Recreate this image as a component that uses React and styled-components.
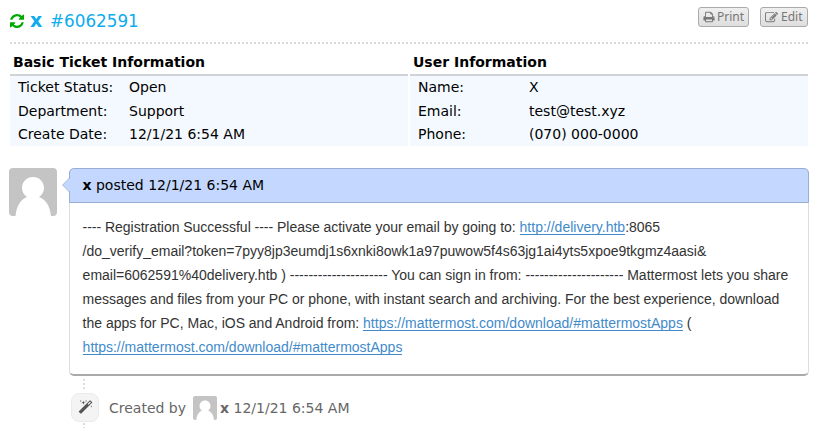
import React from 'react';
import styled, { createGlobalStyle } from 'styled-components';

const GlobalStyle = createGlobalStyle`
  * { box-sizing: border-box; }
  body {
    margin: 0;
    background: #fff;
    color: #000;
    font: 14px/20px "DejaVu Sans", sans-serif;
    overflow: hidden;
  }
`;

const Page = styled.main`
  height: 428px;
  padding: 0 9px;
  overflow: hidden;
`;

const Header = styled.header`
  display: flex;
  justify-content: space-between;
  align-items: flex-start;
  height: 44px;
  margin: 0 1px;
  padding-top: 7px;
  background: repeating-linear-gradient(90deg, #d8d8d8 0 2px, #fff 2px 4px) 0 100% / 100% 2px no-repeat;
`;

const Title = styled.h1`
  display: flex;
  align-items: center;
  margin: 3px 0 0;
  font-size: 16.8px;
  font-weight: 400;
  line-height: 20px;
  color: #0caced;
  b {
    width: 14px;
    margin: 0 6px 2px 0;
    font-size: 19px;
  }
`;

const Icon = styled.svg`
  display: block;
  flex: none;
  width: ${(p) => p.$size}px;
  height: ${(p) => p.$size}px;
  margin-right: ${(p) => p.$gap || 0}px;
  fill: ${(p) => p.$color || 'currentColor'};
`;

const Actions = styled.div`
  display: flex;
  gap: 11px;
`;

const ActionButton = styled.button`
  display: flex;
  align-items: center;
  width: ${(p) => p.$width}px;
  height: 20px;
  padding: 0 0 0 4px;
  border: 1px solid #aaa;
  border-radius: 3px;
  background: linear-gradient(#efefef, #dedede);
  color: #777;
  font: 12px/18px "Noto Sans", sans-serif;
`;

const InfoGrid = styled.section`
  display: grid;
  grid-template-columns: 398px 398px;
  gap: 2px;
  margin: 8px 0 0 1px;
`;

const InfoTitle = styled.h2`
  height: 24px;
  margin: 0;
  padding: 0 3px;
  border-bottom: 2px solid #cfd3d8;
  font-size: 14px;
  line-height: 20px;
`;

const InfoList = styled.dl`
  display: grid;
  grid-template-columns: 111px 1fr;
  grid-template-rows: 24px 23px 23px;
  margin: 0;
  padding: 0 8px;
  background: #f4f9ff;
  line-height: 23px;
  dt, dd { margin: 0; }
`;

const Entry = styled.article`
  display: flex;
  align-items: flex-start;
  margin-top: 22px;
`;

const AvatarSvg = styled.svg`
  display: block;
  flex: none;
  width: ${(p) => p.$size}px;
  height: ${(p) => p.$size}px;
  border-radius: ${(p) => p.$radius}px;
`;

const Card = styled.div`
  width: 740px;
  height: 208px;
  margin-left: 12px;
  border: 1px solid #ddd;
  border-top: 0;
  border-bottom: 2px solid #aaa;
  border-radius: 5px;
`;

const CardHeader = styled.header`
  position: relative;
  height: 35px;
  margin: 0 -1px;
  padding: 0 12.5px;
  border: 1px solid #96aed3;
  border-radius: 5px 5px 0 0;
  background: #c4d8ff;
  line-height: 33px;
`;

const Pointer = styled.svg`
  position: absolute;
  top: 8px;
  left: -8px;
  width: 9px;
  height: 16px;
`;

const Body = styled.div`
  padding: 12px 12.6px 0;
  color: #333;
  font: 14px/24px "Liberation Sans", Arial, sans-serif;
`;

const Line = styled.div`
  white-space: pre;
  letter-spacing: ${(p) => p.$track || 0}px;
`;

const Link = styled.a`
  display: inline-block;
  height: 16px;
  line-height: 16px;
  letter-spacing: 0;
  color: #428bca;
  border-bottom: 1px solid #428bca;
  text-decoration: none;
`;

const Rail = styled.div`
  width: 2px;
  height: ${(p) => p.$height}px;
  margin: ${(p) => p.$top}px 0 ${(p) => p.$bottom || 0}px 74px;
  background: repeating-linear-gradient(#ddd 0 2px, #fff 2px 4px);
`;

const Event = styled.div`
  display: flex;
  align-items: center;
  height: 29px;
  margin-left: 62px;
  color: #666;
  white-space: pre;
`;

const EventBadge = styled.div`
  display: grid;
  place-items: center;
  width: 28px;
  height: 29px;
  margin-right: 10px;
  border: 1px solid #eaeaea;
  border-radius: 8px;
  background: #f4f4f4;
  color: #555;
`;

const EventAvatar = styled.span`
  margin: 0 3px 0 7px;
`;

const refreshPath = 'M1511 928q0 5-1 7-64 268-268 434.5t-478 166.5q-146 0-282.5-55t-243.5-157l-129 129q-19 19-45 19t-45-19-19-45v-448q0-26 19-45t45-19h448q26 0 45 19t19 45-19 45l-137 137q71 66 161 102t187 36q134 0 250-65t186-179q11-17 53-117 8-23 30-23h192q13 0 22.5 9.5t9.5 22.5zm25-800v448q0 26-19 45t-45 19h-448q-26 0-45-19t-19-45 19-45l138-138q-148-137-349-137-134 0-250 65t-186 179q-11 17-53 117-8 23-30 23h-199q-13 0-22.5-9.5t-9.5-22.5v-7q65-268 270-434.5t480-166.5q146 0 284 55.5t245 156.5l130-129q19-19 45-19t45 19 19 45z';
const printPath = 'M448 1536h896v-256h-896v256zm0-640h896v-384h-160q-40 0-68-28t-28-68v-160h-640v640zm1152 64q0-26-19-45t-45-19-45 19-19 45 19 45 45 19 45-19 19-45zm128 0v416q0 13-9.5 22.5t-22.5 9.5h-224v160q0 40-28 68t-68 28h-960q-40 0-68-28t-28-68v-160h-224q-13 0-22.5-9.5t-9.5-22.5v-416q0-79 56.5-135.5t135.5-56.5h64v-544q0-40 28-68t68-28h672q40 0 88 20t76 48l152 152q28 28 48 76t20 88v256h64q79 0 135.5 56.5t56.5 135.5z';
const editPath = 'M888 1184l116-116-152-152-116 116v56h96v96h56zm440-720q-16-16-33 1l-350 350q-17 17-1 33t33-1l350-350q17-17 1-33zm80 594v190q0 119-84.5 203.5t-203.5 84.5h-832q-119 0-203.5-84.5t-84.5-203.5v-832q0-119 84.5-203.5t203.5-84.5h832q63 0 117 25 15 7 18 23 3 17-9 29l-49 49q-14 14-32 8-23-6-45-6h-832q-66 0-113 47t-47 113v832q0 66 47 113t113 47h832q66 0 113-47t47-113v-126q0-13 9-22l64-64q15-15 35-7t20 29zm-96-738l288 288-672 672h-288v-288zm444 132l-92 92-288-288 92-92q28-28 68-28t68 28l152 152q28 28 28 68t-28 68z';
const magicPath = 'M1254 581l293-293-107-107-293 293zm447-293q0 27-18 45l-1286 1286q-18 18-45 18t-45-18l-198-198q-18-18-18-45t18-45l1286-1286q18-18 45-18t45 18l198 198q18 18 18 45zm-1351-190l98 30-98 30-30 98-30-98-98-30 98-30 30-98zm350 162l196 60-196 60-60 196-60-196-196-60 196-60 60-196zm930 478l98 30-98 30-30 98-30-98-98-30 98-30 30-98zm-640-640l98 30-98 30-30 98-30-98-98-30 98-30 30-98z';

function Avatar({ size, radius }) {
  return (
    <AvatarSvg viewBox="0 0 48 48" $size={size} $radius={radius}>
      <rect width="48" height="48" fill="#c4c4c4" />
      <path fill="#fff" d="M24 9c-6.2 0-11 4.8-11 11 0 3.8 2 7 5 9C12 31 7.500 38 6.500 48h35.500c-1-10-5.500-17-12-19 3-2 5-5.200 5-9 0-6.200-4.800-11-11-11z" />
    </AvatarSvg>
  );
}

function Info({ title, rows }) {
  return (
    <div>
      <InfoTitle>{title}</InfoTitle>
      <InfoList>
        {rows.map(([label, value]) => (
          <React.Fragment key={label}>
            <dt>{label}</dt>
            <dd>{value}</dd>
          </React.Fragment>
        ))}
      </InfoList>
    </div>
  );
}

export default function App() {
  return (
    <Page>
      <GlobalStyle />
      <Header>
        <Title>
          <Icon viewBox="0 0 1536 1536" $size={14} $gap={6} $color="#0a0"><path d={refreshPath} /></Icon>
          <b>x</b>
          <span>#6062591</span>
        </Title>
        <Actions>
          <ActionButton $width={51}>
            <Icon viewBox="0 0 1792 1792" $size={12} $gap={2}><path d={printPath} /></Icon>Print
          </ActionButton>
          <ActionButton $width={48}>
            <Icon viewBox="0 0 1792 1792" $size={13} $gap={3}><path d={editPath} /></Icon>Edit
          </ActionButton>
        </Actions>
      </Header>
      <InfoGrid>
        <Info title="Basic Ticket Information" rows={[['Ticket Status:', 'Open'], ['Department:', 'Support'], ['Create Date:', '12/1/21 6:54 AM']]} />
        <Info title="User Information" rows={[['Name:', 'X'], ['Email:', 'test@test.xyz'], ['Phone:', '(070) 000-0000']]} />
      </InfoGrid>
      <Entry>
        <Avatar size={48} radius={4} />
        <Card>
          <CardHeader>
            <Pointer viewBox="0 0 9 16">
              <path d="M9 0.500L1 8l8 7.500z" fill="#c4d8ff" />
              <path d="M8 0.500L0.700 8 8 15.500" fill="none" stroke="#96aed3" />
            </Pointer>
            <b>x</b> posted 12/1/21 6:54 AM
          </CardHeader>
          <Body>
            <Line $track={-0.025}>---- Registration Successful ---- Please activate your email by going to: <Link>http://delivery.htb</Link>:8065</Line>
            <Line $track={-0.01}>/do_verify_email?token=7pyy8jp3eumdj1s6xnki8owk1a97puwow5f4s63jg1ai4yts5xpoe9tkgmz4aasi&amp;</Line>
            <Line>email=6062591%40delivery.htb ) --------------------- You can sign in from: --------------------- Mattermost lets you share</Line>
            <Line $track={-0.02}>messages and files from your PC or phone, with instant search and archiving. For the best experience, download</Line>
            <Line $track={-0.01}>the apps for PC, Mac, iOS and Android from: <Link>https://mattermost.com/download/#mattermostApps</Link> (</Line>
            <Line><Link>https://mattermost.com/download/#mattermostApps</Link></Line>
          </Body>
        </Card>
      </Entry>
      <Rail $top={3} $height={10} $bottom={4} />
      <Event>
        <EventBadge><Icon viewBox="0 0 1792 1792" $size={15}><path d={magicPath} /></Icon></EventBadge>
        Created by
        <EventAvatar><Avatar size={24} radius={2} /></EventAvatar>
        <b>x</b> 12/1/21 6:54 AM
      </Event>
      <Rail $top={1} $height={5} />
    </Page>
  );
}
